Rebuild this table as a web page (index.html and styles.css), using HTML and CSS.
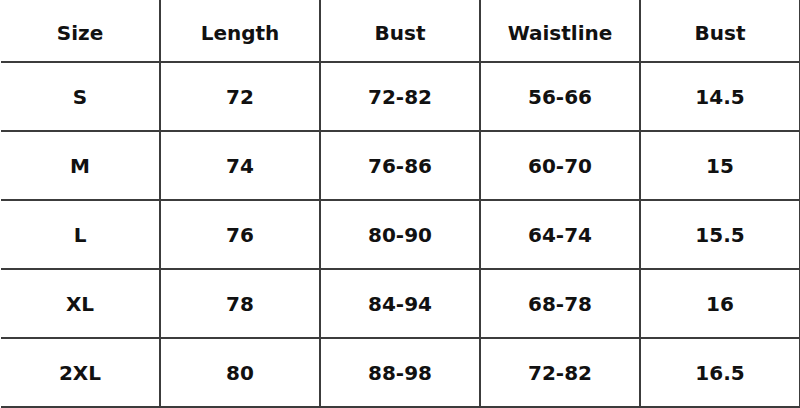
FILE: index.html
```html
<!DOCTYPE html>
<html>
<head>
<meta charset="utf-8">
<link rel="stylesheet" href="styles.css">
</head>
<body>
<div class="chart">
  <div class="cell head">Size</div>
  <div class="cell head">Length</div>
  <div class="cell head">Bust</div>
  <div class="cell head">Waistline</div>
  <div class="cell head">Bust</div>

  <div class="cell">S</div>
  <div class="cell">72</div>
  <div class="cell">72-82</div>
  <div class="cell">56-66</div>
  <div class="cell">14.5</div>

  <div class="cell">M</div>
  <div class="cell">74</div>
  <div class="cell">76-86</div>
  <div class="cell">60-70</div>
  <div class="cell">15</div>

  <div class="cell">L</div>
  <div class="cell">76</div>
  <div class="cell">80-90</div>
  <div class="cell">64-74</div>
  <div class="cell">15.5</div>

  <div class="cell">XL</div>
  <div class="cell">78</div>
  <div class="cell">84-94</div>
  <div class="cell">68-78</div>
  <div class="cell">16</div>

  <div class="cell">2XL</div>
  <div class="cell">80</div>
  <div class="cell">88-98</div>
  <div class="cell">72-82</div>
  <div class="cell">16.5</div>
</div>
</body>
</html>
```

FILE: styles.css
```css
html, body {
  margin: 0;
  padding: 0;
  background: #ffffff;
  overflow: hidden;
}

.chart {
  margin-left: 1px;
  display: grid;
  grid-template-columns: repeat(5, 160px);
  grid-template-rows: 63px;
  grid-auto-rows: 69px;
  font-family: "DejaVu Sans", "Liberation Sans", sans-serif;
  font-weight: bold;
  font-size: 20px;
  color: #111111;
}

.cell {
  box-sizing: border-box;
  border-right: 2px solid #3c3c3c;
  border-bottom: 2px solid #3c3c3c;
  display: flex;
  align-items: center;
  justify-content: center;
}

.head {
  padding-top: 4px;
}
```
